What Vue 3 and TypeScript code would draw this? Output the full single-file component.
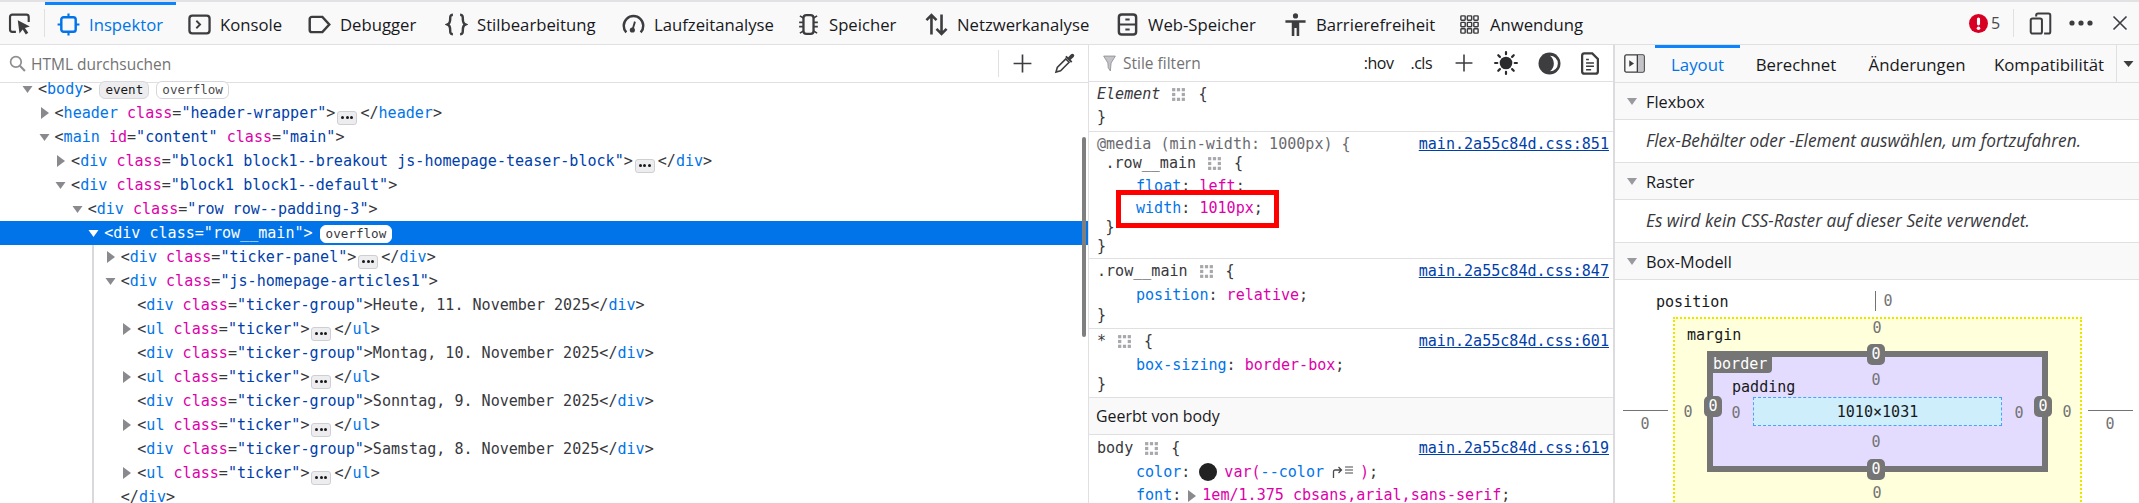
<script setup lang="ts">
type Tok = [string, string]
interface Row { depth: number; arrow?: 'open' | 'closed'; toks: Tok[]; selected?: boolean; badges?: string[]; }

function open(tag: string, attrs: [string, string][] = []): Tok[] {
  const out: Tok[] = [['p', '<'], ['t', tag]]
  for (const [a, v] of attrs) {
    out.push(['p', ' '], ['a', a], ['p', '='], ['v', `"${v}"`])
  }
  out.push(['p', '>'])
  return out
}
const close = (tag: string): Tok[] => [['p', '</'], ['t', tag], ['p', '>']]
const more: Tok = ['m', '']
const collapsed = (tag: string, cls: string): Tok[] => [...open(tag, [['class', cls]]), more, ...close(tag)]
const group = (text: string): Tok[] => [...open('div', [['class', 'ticker-group']]), ['x', text], ...close('div')]

const rows: Row[] = [
  { depth: 0, arrow: 'open', toks: open('body'), badges: ['event', 'overflow'] },
  { depth: 1, arrow: 'closed', toks: collapsed('header', 'header-wrapper') },
  { depth: 1, arrow: 'open', toks: open('main', [['id', 'content'], ['class', 'main']]) },
  { depth: 2, arrow: 'closed', toks: collapsed('div', 'block1 block1--breakout js-homepage-teaser-block') },
  { depth: 2, arrow: 'open', toks: open('div', [['class', 'block1 block1--default']]) },
  { depth: 3, arrow: 'open', toks: open('div', [['class', 'row row--padding-3']]) },
  { depth: 4, arrow: 'open', toks: open('div', [['class', 'row__main']]), selected: true, badges: ['overflow'] },
  { depth: 5, arrow: 'closed', toks: collapsed('div', 'ticker-panel') },
  { depth: 5, arrow: 'open', toks: open('div', [['class', 'js-homepage-articles1']]) },
  { depth: 6, toks: group('Heute, 11. November 2025') },
  { depth: 6, arrow: 'closed', toks: collapsed('ul', 'ticker') },
  { depth: 6, toks: group('Montag, 10. November 2025') },
  { depth: 6, arrow: 'closed', toks: collapsed('ul', 'ticker') },
  { depth: 6, toks: group('Sonntag, 9. November 2025') },
  { depth: 6, arrow: 'closed', toks: collapsed('ul', 'ticker') },
  { depth: 6, toks: group('Samstag, 8. November 2025') },
  { depth: 6, arrow: 'closed', toks: collapsed('ul', 'ticker') },
  { depth: 5, toks: close('div') },
]

const indent = (d: number) => `${38 + d * 16.55}px`

const tabs = [
  { key: 'inspektor', label: 'Inspektor' },
  { key: 'konsole', label: 'Konsole' },
  { key: 'debugger', label: 'Debugger' },
  { key: 'stil', label: 'Stilbearbeitung' },
  { key: 'lauf', label: 'Laufzeitanalyse' },
  { key: 'speicher', label: 'Speicher' },
  { key: 'netz', label: 'Netzwerkanalyse' },
  { key: 'web', label: 'Web-Speicher' },
  { key: 'barr', label: 'Barrierefreiheit' },
  { key: 'anw', label: 'Anwendung' },
]
</script>

<template>
  <div class="app">
    <header class="topbar">
      <div class="pick">
        <svg class="ico" viewBox="0 0 16 16" fill="none" stroke="#3d3d40" stroke-width="1.5">
          <path d="M5.5 13.8H3A1.6 1.6 0 0 1 1.4 12.200V3.400A1.600 1.600 0 0 1 3 1.800h9.800a1.600 1.600 0 0 1 1.600 1.600V7" />
          <path d="M6.800 5.800l8.400 4.300-3.400 1.100 2.300 3.300-1.700 1.100-2.200-3.500L8 15z" fill="#3d3d40" stroke="none" />
        </svg>
      </div>
      <div v-for="t in tabs" :key="t.key" class="tab" :class="['tab-' + t.key, { active: t.key === 'inspektor' }]">
        <svg class="ico" viewBox="0 0 16 16" fill="none" :stroke="t.key === 'inspektor' ? '#0074e8' : '#3d3d40'" stroke-width="1.4">
          <template v-if="t.key === 'inspektor'">
            <rect x="3" y="3" width="10" height="10" rx="1.600" stroke-width="1.700" />
            <path d="M8 .4V3M8 13v2.600M.4 8H3M13 8h2.600" stroke-width="1.500" />
          </template>
          <template v-else-if="t.key === 'konsole'">
            <rect x="1" y="1.800" width="14" height="12.400" rx="2" stroke-width="1.600" />
            <path d="M5.800 5.400L8.400 8l-2.600 2.600" stroke-width="1.300" />
          </template>
          <path v-else-if="t.key === 'debugger'" d="M1.200 4.200a1.500 1.500 0 0 1 1.500-1.500h7.300l4.800 5.300-4.800 5.300H2.700a1.500 1.500 0 0 1-1.500-1.500z" stroke-width="1.700" />
          <path v-else-if="t.key === 'stil'" d="M5.500 1.200C3.600 1.200 3.600 2.400 3.600 4.200c0 2.200-.2 3.200-1.800 3.800 1.600.6 1.800 1.600 1.800 3.800 0 1.800 0 3 1.900 3M10.500 1.200c1.900 0 1.900 1.200 1.900 3 0 2.200.2 3.200 1.800 3.800-1.600.6-1.800 1.600-1.800 3.800 0 1.800 0 3-1.900 3" stroke-width="1.700" />
          <template v-else-if="t.key === 'lauf'">
            <path d="M3 13.500A6.800 6.800 0 1 1 13 13.500" stroke-width="1.700" />
            <circle cx="7.200" cy="11.800" r="1.800" fill="#3d3d40" stroke="none" />
            <path d="M7.400 11.500L9 6" stroke-width="1.300" />
          </template>
          <template v-else-if="t.key === 'speicher'">
            <rect x="4.500" y="1.500" width="7" height="13" rx="2" stroke-width="1.600" />
            <path d="M4.500 3.500L2 2M4.500 6.500H1.500M4.500 9.500H1.500M4.500 12.500L2 14M11.500 3.500L14 2M11.500 6.500h3M11.500 9.500h3M11.500 12.500L14 14" stroke-width="1.100" />
          </template>
          <path v-else-if="t.key === 'netz'" d="M4.500 15V1.500M1 5l3.500-3.500L8 5M11.500 1v13.500M8 11l3.500 3.500L15 11" stroke-width="1.800" />
          <template v-else-if="t.key === 'web'">
            <rect x="2" y="1" width="12" height="14" rx="2" stroke-width="1.700" />
            <path d="M2 8h12M6.500 4.600h3M6.500 11.400h3" stroke-width="1.400" />
          </template>
          <template v-else-if="t.key === 'barr'">
            <circle cx="8" cy="2" r="1.800" fill="#3d3d40" stroke="none" />
            <path d="M1 5h14v1.800h-4.400V16H8.800v-5.500H7.200V16H5.400V6.800H1z" fill="#3d3d40" stroke="none" />
          </template>
          <g v-else stroke-width="1">
            <rect x="2" y="2" width="3" height="3" rx=".5" /><rect x="6.500" y="2" width="3" height="3" rx=".5" /><rect x="11" y="2" width="3" height="3" rx=".5" />
            <rect x="2" y="6.500" width="3" height="3" rx=".5" /><rect x="6.500" y="6.500" width="3" height="3" rx=".5" /><rect x="11" y="6.500" width="3" height="3" rx=".5" />
            <rect x="2" y="11" width="3" height="3" rx=".5" /><rect x="6.500" y="11" width="3" height="3" rx=".5" /><rect x="11" y="11" width="3" height="3" rx=".5" />
          </g>
        </svg>
        <span>{{ t.label }}</span>
      </div>
      <div class="top-end">
        <svg class="err" viewBox="0 0 16 16">
          <circle cx="8" cy="8" r="8" fill="#d70022" />
          <rect x="6.700" y="3" width="2.600" height="6.600" rx="1.300" fill="#fff" />
          <circle cx="8" cy="12" r="1.500" fill="#fff" />
        </svg>
        <span class="err-n">5</span>
        <i class="end-sep"></i>
        <svg class="ico dev" viewBox="0 0 16 16" fill="none" stroke="#3d3d40" stroke-width="1.400">
          <path d="M5 3.200V2.300A1.300 1.300 0 0 1 6.300 1h7.200a1.300 1.300 0 0 1 1.300 1.300v11.400a1.300 1.300 0 0 1-1.300 1.300H10.500" />
          <rect x="1.200" y="4.500" width="7.800" height="10.500" rx="1.300" />
        </svg>
        <svg class="dots" viewBox="0 0 24 6"><circle cx="3" cy="3" r="2.600" fill="#3d3d40" /><circle cx="12" cy="3" r="2.600" fill="#3d3d40" /><circle cx="21" cy="3" r="2.600" fill="#3d3d40" /></svg>
        <svg class="x" viewBox="0 0 16 16" stroke="#3d3d40" stroke-width="1.600" fill="none"><path d="M1.500 1.500l13 13M14.500 1.500l-13 13" /></svg>
      </div>
    </header>

    <div class="panes">
      <section class="markup">
        <div class="bar search-bar">
          <svg class="mag" viewBox="0 0 16 16" fill="none" stroke="#8f8f93" stroke-width="1.600"><circle cx="6.500" cy="6.500" r="5" /><path d="M10.200 10.200L15 15" stroke-width="2" /></svg>
          <span class="ph search-ph">HTML durchsuchen</span>
          <div class="search-tools">
            <svg class="plus" viewBox="0 0 16 16" stroke="#3d3d40" stroke-width="1.400"><path d="M8 .5v15M.5 8h15" /></svg>
            <svg class="dropper" viewBox="0 0 16 16" fill="none" stroke="#3d3d40" stroke-width="1.200">
              <path d="M9 4.500L2.500 11 1.500 14.500 5 13.500 11.500 7z" />
              <path d="M8.500 3l4.500 4.500 1-1-1.300-1.300L15 3a1.400 1.400 0 0 0-2-2l-2.200 2.300L9.500 2z" fill="#3d3d40" stroke="none" />
            </svg>
          </div>
        </div>
        <div class="tree">
          <div v-for="(r, i) in rows" :key="i" class="node" :class="{ sel: r.selected }" :style="{ paddingLeft: indent(r.depth) }">
            <svg v-if="r.arrow === 'open'" class="tw tw-open" viewBox="0 0 10 7"><path d="M0 0h10L5 7z" /></svg>
            <svg v-else-if="r.arrow === 'closed'" class="tw tw-closed" viewBox="0 0 8 12"><path d="M0 0l8 6-8 6z" /></svg>
            <template v-for="(tk, j) in r.toks" :key="j">
              <span v-if="tk[0] === 'm'" class="more"><i></i><i></i><i></i></span>
              <span v-else :class="'k-' + tk[0]">{{ tk[1] }}</span>
            </template>
            <span v-for="b in r.badges" :key="b" class="badge" :class="'b-' + b">{{ b }}</span>
          </div>
          <i class="guide"></i>
          <i class="sbar"></i>
        </div>
      </section>

      <section class="styles">
        <div class="bar styles-bar">
          <svg class="funnel" viewBox="0 0 12 16" fill="#c4c4c8" stroke="#8f8f93" stroke-width=".8"><path d="M.5 1h11L7.500 7.500 6.800 15 4.800 12 4.500 7.500z" /></svg>
          <span class="ph filter-ph">Stile filtern</span>
          <div class="style-tools">
            <span class="pseudo hov">:hov</span>
            <span class="pseudo cls">.cls</span>
            <svg class="plus2" viewBox="0 0 16 16" stroke="#3d3d40" stroke-width="1.400"><path d="M8 .5v15M.5 8h15" /></svg>
            <svg class="sun" viewBox="0 0 22 22" stroke="#2b2b2e" stroke-width="2" stroke-linecap="round"><circle cx="11" cy="11" r="5.800" fill="#2b2b2e" stroke="none" /><path d="M11 1v2M11 19v2M1 11h2M19 11h2M3.900 3.900l1.500 1.500M16.600 16.600l1.500 1.500M3.900 18.100l1.500-1.500M16.600 5.400l1.500-1.500" /></svg>
            <svg class="moon" viewBox="0 0 22 22"><circle cx="11" cy="11" r="10.500" fill="#3d3d40" /><path d="M11.500 3.500A7.500 7.500 0 0 1 11.500 18.500 9.500 9.500 0 0 0 11.500 3.500z" fill="#fff" /></svg>
            <svg class="doc" viewBox="0 0 16 20" fill="none" stroke="#3d3d40" stroke-width="2"><path d="M3 1h7l5 5v11a2 2 0 0 1-2 2H3a2 2 0 0 1-2-2V3a2 2 0 0 1 2-2z" /><path d="M4.500 9.500h7M4.500 12.500h7M4.500 15.500h4.500M4.500 6.500h2.500" stroke-width="1.300" /></svg>
          </div>
        </div>

        <div class="rule r1">
          <div class="ln"><em class="sel-t">Element</em><svg class="grid" viewBox="0 0 14 14"><g fill="#a8a8ac"><rect x="1" y="1" width="3" height="3"/><rect x="5.500" y="1" width="3" height="3"/><rect x="10" y="1" width="3" height="3"/><rect x="1" y="5.500" width="3" height="3"/><rect x="10" y="5.500" width="3" height="3"/><rect x="1" y="10" width="3" height="3"/><rect x="5.500" y="10" width="3" height="3"/><rect x="10" y="10" width="3" height="3"/></g></svg><span class="sel-t">{</span></div>
          <div class="ln close-empty sel-t">}</div>
        </div>

        <div class="rule r2">
          <div class="ln"><span class="at">@media (min-width: 1000px) {</span><a class="src">main.2a55c84d.css:851</a></div>
          <div class="ln nested"><span class="sel-t">.row__main</span><svg class="grid" viewBox="0 0 14 14"><g fill="#a8a8ac"><rect x="1" y="1" width="3" height="3"/><rect x="5.500" y="1" width="3" height="3"/><rect x="10" y="1" width="3" height="3"/><rect x="1" y="5.500" width="3" height="3"/><rect x="10" y="5.500" width="3" height="3"/><rect x="1" y="10" width="3" height="3"/><rect x="5.500" y="10" width="3" height="3"/><rect x="10" y="10" width="3" height="3"/></g></svg><span class="sel-t">{</span></div>
          <div class="ln decl"><span class="prop">float</span><span class="pt">: </span><span class="val">left</span><span class="pt">;</span></div>
          <div class="ln decl"><span class="prop">width</span><span class="pt">: </span><span class="val">1010px</span><span class="pt">;</span></div>
          <div class="ln nested sel-t">}</div>
          <div class="ln sel-t">}</div>
          <i class="mark"></i>
        </div>

        <div class="rule r3">
          <div class="ln"><span class="sel-t">.row__main</span><svg class="grid" viewBox="0 0 14 14"><g fill="#a8a8ac"><rect x="1" y="1" width="3" height="3"/><rect x="5.500" y="1" width="3" height="3"/><rect x="10" y="1" width="3" height="3"/><rect x="1" y="5.500" width="3" height="3"/><rect x="10" y="5.500" width="3" height="3"/><rect x="1" y="10" width="3" height="3"/><rect x="5.500" y="10" width="3" height="3"/><rect x="10" y="10" width="3" height="3"/></g></svg><span class="sel-t">{</span><a class="src">main.2a55c84d.css:847</a></div>
          <div class="ln decl"><span class="prop">position</span><span class="pt">: </span><span class="val">relative</span><span class="pt">;</span></div>
          <div class="ln after sel-t">}</div>
        </div>

        <div class="rule r4">
          <div class="ln"><span class="sel-t">*</span><svg class="grid" viewBox="0 0 14 14"><g fill="#a8a8ac"><rect x="1" y="1" width="3" height="3"/><rect x="5.500" y="1" width="3" height="3"/><rect x="10" y="1" width="3" height="3"/><rect x="1" y="5.500" width="3" height="3"/><rect x="10" y="5.500" width="3" height="3"/><rect x="1" y="10" width="3" height="3"/><rect x="5.500" y="10" width="3" height="3"/><rect x="10" y="10" width="3" height="3"/></g></svg><span class="sel-t">{</span><a class="src">main.2a55c84d.css:601</a></div>
          <div class="ln decl"><span class="prop">box-sizing</span><span class="pt">: </span><span class="val">border-box</span><span class="pt">;</span></div>
          <div class="ln sel-t">}</div>
        </div>

        <div class="inherit">Geerbt von body</div>

        <div class="rule r5">
          <div class="ln"><span class="sel-t">body</span><svg class="grid" viewBox="0 0 14 14"><g fill="#a8a8ac"><rect x="1" y="1" width="3" height="3"/><rect x="5.500" y="1" width="3" height="3"/><rect x="10" y="1" width="3" height="3"/><rect x="1" y="5.500" width="3" height="3"/><rect x="10" y="5.500" width="3" height="3"/><rect x="1" y="10" width="3" height="3"/><rect x="5.500" y="10" width="3" height="3"/><rect x="10" y="10" width="3" height="3"/></g></svg><span class="sel-t">{</span><a class="src">main.2a55c84d.css:619</a></div>
          <div class="ln decl"><span class="prop">color</span><span class="pt">:</span><i class="swatch"></i><span class="val">var(</span><span class="prop">--color</span><svg class="jump" viewBox="0 0 22 14" fill="none" stroke="#4a4a4f" stroke-width="1.300"><path d="M1.500 13V6.500a1.500 1.500 0 0 1 1.500-1.500h6M6.500 2L9.500 5 6.500 8" /><path d="M13 2h8M13 5h8M13 8h8" stroke-width="1.100" /></svg><span class="val">)</span><span class="pt">;</span></div>
          <div class="ln decl"><span class="prop">font</span><span class="pt">:</span><svg class="tw-font" viewBox="0 0 8 12"><path d="M0 0l8 6-8 6z" /></svg><span class="val">1em/1.375 cbsans,arial,sans-serif</span><span class="pt">;</span></div>
        </div>
      </section>

      <section class="layout">
        <div class="bar side-tabs">
          <svg class="toggle" viewBox="0 0 22 20" fill="none" stroke="#3d3d40" stroke-width="1.400"><rect x=".8" y="1" width="20.400" height="18" rx="1.500" /><rect x="14" y="1.500" width="6.500" height="17" fill="#c4c4c8" stroke="none" /><path d="M14 1v18" /><path d="M5.500 6.500l5 3.500-5 3.500z" fill="#3d3d40" stroke="none" /></svg>
          <span class="stab stab-on s1">Layout</span>
          <span class="stab s2">Berechnet</span>
          <span class="stab s3">Änderungen</span>
          <span class="stab s4">Kompatibilität</span>
          <span class="s-more"><svg viewBox="0 0 10 6"><path d="M0 0h10L5 6z" fill="#3d3d40" /></svg></span>
        </div>
        <div class="sec-h"><svg class="tw tw-sec" viewBox="0 0 10 7"><path d="M0 0h10L5 7z" /></svg>Flexbox</div>
        <div class="sec-b">Flex-Behälter oder -Element auswählen, um fortzufahren.</div>
        <div class="sec-h"><svg class="tw tw-sec" viewBox="0 0 10 7"><path d="M0 0h10L5 7z" /></svg>Raster</div>
        <div class="sec-b">Es wird kein CSS-Raster auf dieser Seite verwendet.</div>
        <div class="sec-h sec-box"><svg class="tw tw-sec" viewBox="0 0 10 7"><path d="M0 0h10L5 7z" /></svg>Box-Modell</div>
        <div class="bm">
          <span class="lbl pos-l">position</span>
          <i class="tick"></i>
          <span class="z pos-0">0</span>
          <i class="hl hl-l"></i><span class="z off-l">0</span>
          <i class="hl hl-r"></i><span class="z off-r">0</span>
          <div class="m-box">
            <span class="lbl m-l">margin</span>
            <span class="z m-t">0</span>
            <span class="z m-le">0</span>
            <span class="z m-ri">0</span>
            <span class="z m-b">0</span>
            <div class="b-box">
              <span class="b-l">border</span>
              <span class="bz bz-t">0</span>
              <span class="bz bz-l">0</span>
              <span class="bz bz-r">0</span>
              <span class="bz bz-b">0</span>
              <span class="lbl p-l">padding</span>
              <span class="z p-t">0</span>
              <span class="z p-le">0</span>
              <span class="z p-ri">0</span>
              <span class="z p-b">0</span>
              <div class="c-box">1010×1031</div>
            </div>
          </div>
        </div>
      </section>
    </div>
  </div>
</template>

<style>
html, body { margin: 0; background: #fff; overflow: hidden; }
</style>

<style scoped>
.app {
  width: 2139px; height: 503px; overflow: hidden; display: flex; flex-direction: column;
  font-family: "Open Sans", "Noto Sans", sans-serif; font-size: 15.5px; color: #18181a; background: #fff;
}
.ico { width: 23px; height: 23px; flex: none; }

.topbar { height: 42px; flex: none; display: flex; align-items: stretch; background: #f9f9fa; border-top: 2px solid #e2e2e4; border-bottom: 1px solid #e0e0e2; }
.pick { width: 45px; flex: none; display: flex; align-items: center; padding-left: 8px; box-sizing: border-box; position: relative; }
.pick::after { content: ""; position: absolute; right: 0; top: 7px; bottom: 7px; width: 1px; background: #e0e0e2; }
.tab { display: flex; align-items: center; gap: 9px; box-sizing: border-box; padding: 0 0 0 12px; flex: none; white-space: nowrap; color: #18181a; border-top: 3px solid transparent; font-size: 16.700px; }
.tab.active { color: #0074e8; border-top-color: #0a84ff; }
.tab-inspektor { width: 131px; }
.tab-konsole { width: 120px; }
.tab-debugger { width: 137px; }
.tab-stil { width: 177px; }
.tab-lauf { width: 175px; }
.tab-speicher { width: 128px; }
.tab-netz { width: 191px; }
.tab-web { width: 168px; }
.tab-barr { width: 174px; }
.tab-anw { width: 154px; }
.top-end { flex: 1; display: flex; align-items: center; }
.err { width: 19px; height: 19px; margin-left: 369px; flex: none; }
.err-n { margin-left: 3px; color: #4a4a4f; font-size: 16px; }
.end-sep { width: 1px; height: 28px; background: #e0e0e2; margin-left: 13px; }
.dev { margin-left: 15px; }
.dots { width: 24px; height: 6px; margin-left: 17px; flex: none; }
.x { width: 16px; height: 16px; margin-left: 19px; flex: none; }

.panes { flex: 1; display: flex; min-height: 0; }
.bar { height: 36px; flex: none; display: flex; align-items: center; box-sizing: content-box; border-bottom: 1px solid #e0e0e2; }
.ph { color: #737373; white-space: nowrap; }

.markup { width: 1088px; flex: none; border-right: 1px solid #e0e0e2; display: flex; flex-direction: column; min-height: 0; }
.search-bar { height: 37px; padding-left: 9px; }
.mag { width: 17px; height: 17px; flex: none; }
.search-ph { margin-left: 5px; }
.search-tools { margin-left: auto; height: 27px; width: 90px; box-sizing: border-box; border-left: 1px solid #e0e0e2; display: flex; align-items: center; gap: 22px; padding-left: 14px; }
.plus { width: 19px; height: 19px; flex: none; }
.dropper { width: 21px; height: 21px; flex: none; }

.tree { flex: 1; position: relative; overflow: hidden; font-family: "DejaVu Sans Mono", monospace; font-size: 15.05px; margin-top: -6px; color: #4a4a4f; }
.node { height: 24px; line-height: 24px; position: relative; white-space: pre; }
.node.sel { background: #0074e8; }
.node.sel span { color: #fff; }
.k-p { color: #38383d; }
.k-x { color: #38383d; }
.k-t { color: #0074e8; }
.k-a { color: #dd00a9; }
.k-v { color: #003eaa; }
.tw { position: absolute; fill: #8a8a8e; }
.tw-open { width: 11px; height: 7px; margin-left: -16px; margin-top: 9px; }
.tw-closed { width: 8px; height: 12px; margin-left: -14px; margin-top: 6px; }
.node.sel .tw { fill: #fff; }
.more { display: inline-flex; align-items: center; justify-content: center; gap: 1.500px; width: 20px; height: 14px; box-sizing: border-box; vertical-align: -1px; margin: 0 3px 0 2px; background: #ededf0; border: 1px solid #cfcfd3; border-radius: 3px; }
.more i { width: 3px; height: 3px; border-radius: 50%; background: #18181a; }
.badge { display: inline-block; height: 18px; line-height: 16px; box-sizing: border-box; padding: 0 5px; margin-left: 7px; font-size: 12.600px; border: 1px solid #d7d7db; border-radius: 6px; color: #4a4a4f; background: #fff; }
.b-event { background: #ededf0; color: #18181a; }
.node.sel .badge { color: #38383d; background: #fff; border-color: #fff; }
.guide { position: absolute; left: 92px; top: 168px; bottom: 0; width: 2px; background: #d9d9dc; }
.sbar { position: absolute; left: 1082px; top: 60px; width: 4px; height: 200px; border-radius: 2px; background: #7f7f7f; }

.styles { width: 524px; flex: none; border-right: 1px solid #dcdcde; display: flex; flex-direction: column; min-height: 0; font-family: "DejaVu Sans Mono", monospace; font-size: 15.05px; overflow: hidden; }
.styles .bar, .styles .inherit { font-family: "Open Sans", "Noto Sans", sans-serif; font-size: 15.500px; }
.styles-bar { padding-left: 14px; }
.funnel { width: 13px; height: 17px; flex: none; }
.filter-ph { margin-left: 7px; }
.style-tools { margin-left: auto; display: flex; align-items: center; }
.pseudo { color: #18181a; font-size: 16px; letter-spacing: -.5px; }
.hov { margin-right: 17px; }
.plus2 { width: 18px; height: 18px; margin-left: 23px; flex: none; }
.sun { width: 24px; height: 24px; margin-left: 21px; flex: none; }
.moon { width: 23px; height: 23px; margin-left: 20px; flex: none; }
.doc { width: 18px; height: 23px; margin: 0 14px 0 20px; flex: none; }

.rule { position: relative; box-sizing: border-box; padding: 3px 4px 0 8px; border-bottom: 1px solid #e0e0e2; flex: none; }
.r1 { height: 50px; }
.r2 { height: 127px; }
.r3 { height: 70px; }
.r4 { height: 69px; }
.r5 { border-bottom: 0; padding-top: 4px; }
.ln { height: 19px; line-height: 19px; white-space: pre; display: flex; align-items: center; color: #38383d; }
.sel-t { color: #38383d; font-style: normal; }
em.sel-t { font-style: italic; }
.close-empty { margin-top: 4px; }
.nested { padding-left: 8.500px; }
.decl { padding-left: 39px; margin-top: 3.500px; }
.r3 .decl, .r4 .decl, .r5 .decl { margin-top: 4.500px; }
.after { margin-top: 1.500px; }
.grid { width: 15px; height: 15px; margin: 0 12px 0 11px; flex: none; }
.at { color: #6b6b6f; }
.src { margin-left: auto; color: #003eaa; text-decoration: underline; }
.prop { color: #0074e8; }
.val { color: #dd00a9; }
.pt { color: #38383d; }
.mark { position: absolute; left: 27px; top: 58px; width: 163px; height: 38px; box-sizing: border-box; border: 5px solid #f00; }
.swatch { width: 18px; height: 18px; border-radius: 50%; background: #222; margin: 0 7px 0 9px; flex: none; }
.jump { width: 22px; height: 14px; margin: 0 6px 0 8px; flex: none; }
.tw-font { width: 8px; height: 12px; fill: #8a8a8e; margin: 0 6px 0 7px; flex: none; }
.styles .inherit { height: 36px; line-height: 37px; padding-left: 7px; background: #f9f9fa; border-bottom: 1px solid #e0e0e2; flex: none; font-size: 15.900px; color: #18181a; }

.layout { flex: 1; min-width: 0; display: flex; flex-direction: column; min-height: 0; background: #fff; overflow: hidden; border-left: 1px solid #dcdcde; }
.side-tabs { height: 37px; background: #f9f9fa; font-size: 16.800px; }
.toggle { width: 21px; height: 19px; margin: 0 10px 0 9px; flex: none; }
.stab { display: flex; align-items: center; justify-content: center; box-sizing: border-box; height: 37px; border-top: 3px solid transparent; flex: none; white-space: nowrap; padding-bottom: 2px; }
.stab-on { color: #0074e8; border-top-color: #0a84ff; }
.s1 { width: 85px; }
.s2 { width: 112px; }
.s3 { width: 130px; }
.s4 { width: 134px; }
.s-more { flex: 1; height: 37px; display: flex; align-items: center; padding-left: 6px; border-left: 1px solid #e0e0e2; }
.s-more svg { width: 11px; height: 6px; }
.sec-h { height: 36px; line-height: 38px; flex: none; padding-left: 31px; background: #f9f9fa; border-bottom: 1px solid #e0e0e2; position: relative; font-size: 16.300px; }
.tw-sec { left: 11px; top: 15px; width: 12px; height: 7px; margin: 0; fill: #9a9a9e; }
.sec-b { height: 42px; line-height: 42px; flex: none; padding-left: 31px; font-style: italic; color: #38383d; border-bottom: 1px solid #e0e0e2; font-size: 17.300px; white-space: nowrap; }

.bm { flex: 1; position: relative; overflow: hidden; font-family: "DejaVu Sans Mono", monospace; font-size: 15.05px; }
.lbl { position: absolute; color: #18181a; line-height: 18px; }
.z { position: absolute; color: #737373; line-height: 18px; width: 18px; text-align: center; margin-left: -9px; margin-top: -9px; }
.pos-l { left: 41px; top: 13px; }
.tick { position: absolute; left: 260px; top: 11px; width: 1px; height: 20px; background: #737373; }
.pos-0 { left: 273px; top: 21px; }
.hl { position: absolute; height: 1px; width: 45px; top: 130px; background: #737373; }
.hl-l { left: 8px; }
.hl-r { left: 473px; }
.off-l { left: 30px; top: 144px; }
.off-r { left: 495px; top: 144px; }
.m-box { position: absolute; left: 58px; top: 37px; width: 409px; height: 200px; box-sizing: border-box; border: 2px dotted #e6e600; background: #ffffdc; padding: 32px 32px 0; }
.m-l { left: 12px; top: 7px; }
.m-t { left: 202px; top: 9px; }
.m-le { left: 13px; top: 93px; }
.m-ri { left: 392px; top: 93px; }
.m-b { left: 202px; top: 174px; }
.b-box { position: relative; height: 121px; box-sizing: border-box; border: 6px solid #757575; background: #e3dcff; padding: 40px 40px; }
.b-l { position: absolute; left: 0; top: 0; height: 16px; line-height: 15px; padding: 0 5px 0 0; background: #757575; color: #fff; border-radius: 0 0 4px 0; }
.bz { position: absolute; width: 18px; height: 21px; line-height: 21px; text-align: center; background: #757575; color: #fff; border-radius: 5px; }
.bz-t { left: 154px; top: -13px; }
.bz-b { left: 154px; bottom: -14px; }
.bz-l { left: -9px; top: 39px; }
.bz-r { right: -10px; top: 39px; }
.p-l { left: 19px; top: 21px; }
.p-t { left: 163px; top: 23px; }
.p-b { left: 163px; top: 85px; }
.p-le { left: 23px; top: 56px; }
.p-ri { left: 306px; top: 56px; }
.c-box { height: 29px; line-height: 28px; box-sizing: border-box; text-align: center; background: #cdeefa; border: 1px dashed #4ca0ff; color: #18181a; }
</style>
